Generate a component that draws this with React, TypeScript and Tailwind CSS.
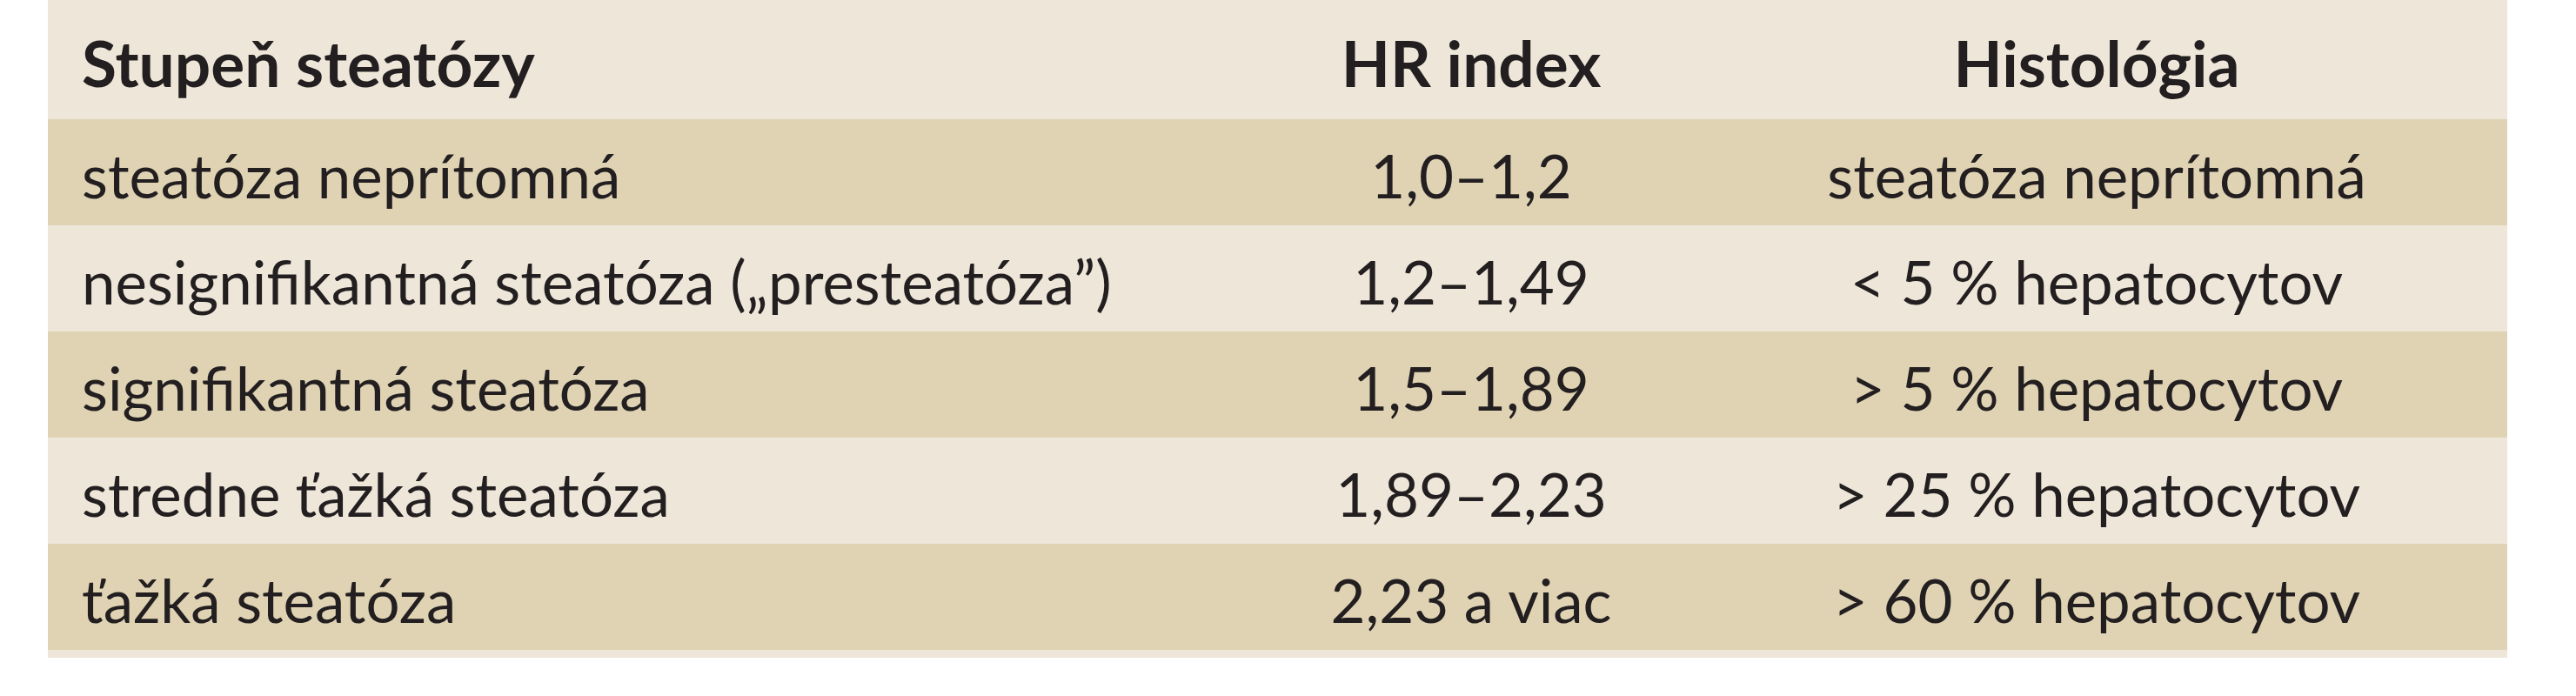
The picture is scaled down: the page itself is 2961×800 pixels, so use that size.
const rows = [
  { grade: "steatóza neprítomná", hr: "1,0–1,2", histo: "steatóza neprítomná" },
  { grade: "nesignifikantná steatóza („presteatóza”)", hr: "1,2–1,49", histo: "< 5 % hepatocytov" },
  { grade: "signifikantná steatóza", hr: "1,5–1,89", histo: "> 5 % hepatocytov" },
  { grade: "stredne ťažká steatóza", hr: "1,89–2,23", histo: "> 25 % hepatocytov" },
  { grade: "ťažká steatóza", hr: "2,23 a viac", histo: "> 60 % hepatocytov" },
];

export default function App() {
  return (
    <div className="w-[2961px] h-[800px] bg-white pl-[55px] font-['Lato','Liberation_Sans',sans-serif] text-[#231f20]">
      <div className="w-[2827px] bg-[#eee7d9]">
        <div className="grid grid-cols-[1389px_494px_944px] h-[137px] items-center pt-[8px] text-[73px] font-bold leading-none">
          <div className="pl-[39px]">Stupeň steatózy</div>
          <div className="text-center">HR index</div>
          <div className="text-center">Histológia</div>
        </div>
        {rows.map((r, i) => (
          <div
            key={i}
            className={
              "grid grid-cols-[1389px_494px_944px] h-[122px] items-center pt-[6px] text-[69px] leading-none " +
              (i % 2 === 0 ? "bg-[#dfd3b4]" : "bg-[#eee7d9]")
            }
          >
            <div className="pl-[39px] whitespace-nowrap">{r.grade}</div>
            <div className="text-center whitespace-nowrap">{r.hr}</div>
            <div className="text-center whitespace-nowrap">{r.histo}</div>
          </div>
        ))}
        <div className="h-[9px]" />
      </div>
    </div>
  );
}
